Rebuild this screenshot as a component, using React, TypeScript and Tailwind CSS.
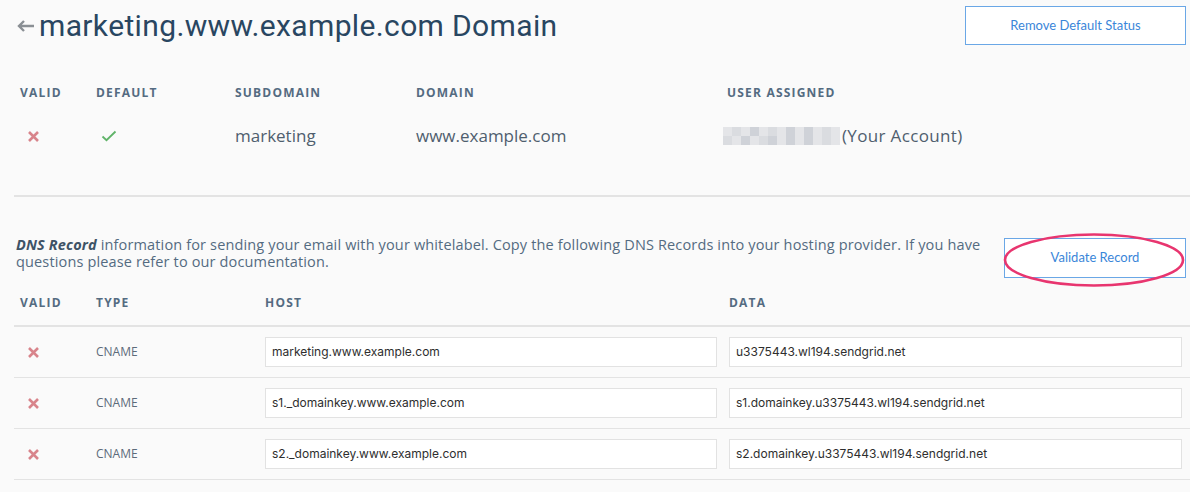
import React from "react";

const headCls =
  "text-[12px] font-bold tracking-[0.1em] uppercase text-[#546b81]";

function XMark() {
  return (
    <svg width="13" height="13" viewBox="0 0 13 13">
      <path
        d="M2 2 L11 11 M11 2 L2 11"
        stroke="#d8848b"
        strokeWidth="2.6"
        strokeLinecap="butt"
      />
    </svg>
  );
}

function Check() {
  return (
    <svg width="16" height="12" viewBox="0 0 16 12">
      <path
        d="M1.5 6.5 L5.5 10.2 L14.5 1.5"
        stroke="#5fb368"
        strokeWidth="1.8"
        fill="none"
      />
    </svg>
  );
}

const records = [
  {
    host: "marketing.www.example.com",
    data: "u3375443.wl194.sendgrid.net",
  },
  {
    host: "s1._domainkey.www.example.com",
    data: "s1.domainkey.u3375443.wl194.sendgrid.net",
  },
  {
    host: "s2._domainkey.www.example.com",
    data: "s2.domainkey.u3375443.wl194.sendgrid.net",
  },
];

function App() {
  return (
    <div
      className="w-[1190px] h-[492px] bg-[#fafafa] overflow-hidden text-[#546b81]"
      style={{ fontFamily: "'Open Sans', Lato, sans-serif" }}
    >
      {/* title row */}
      <div className="flex items-start justify-between pl-4 pr-1 pt-[6px] h-[74px]">
        <div className="flex items-center h-[39px]">
          <svg width="20" height="14" viewBox="0 0 20 14" className="mr-[3px]">
            <path
              d="M18 7 H3 M8 2 L3 7 L8 12"
              stroke="#8a8f94"
              strokeWidth="2.4"
              fill="none"
            />
          </svg>
          <h1
            className="text-[30px] text-[#294661] leading-none tracking-[0.012em]"
            style={{ fontFamily: "Roboto, sans-serif" }}
          >
            marketing.www.example.com Domain
          </h1>
        </div>
        <button
          className="w-[221px] h-[39px] bg-white border border-[#6aa7e6] text-[#3a86d9] text-[13px]"
          style={{ fontFamily: "Lato, sans-serif" }}
        >
          Remove Default Status
        </button>
      </div>

      {/* whitelabel summary */}
      <div className="ml-[14px] border-b-2 border-[#e3e3e3]">
        <div className="grid grid-cols-[76px_139px_181px_311px_1fr] pl-[6px] h-[37px] items-center">
          <div className={headCls}>Valid</div>
          <div className={headCls}>Default</div>
          <div className={headCls}>Subdomain</div>
          <div className={headCls}>Domain</div>
          <div className={headCls}>User Assigned</div>
        </div>
        <div className="grid grid-cols-[76px_139px_181px_311px_1fr] pl-[6px] h-[50px] items-center text-[17px] text-[#4f5e6e]">
          <div className="pl-[7px] flex">
            <XMark />
          </div>
          <div className="pl-[5px] flex">
            <Check />
          </div>
          <div>marketing</div>
          <div>www.example.com</div>
          <div className="flex items-center -ml-[4px]">
            <div className="grid grid-cols-[repeat(13,9px)] grid-rows-2 h-[18px] w-[117px] mr-[2px]">
              {Array.from({ length: 26 }).map((_, i) => (
                <div
                  key={i}
                  className={
                    [3, 7, 9, 15, 18, 20, 22].includes(i)
                      ? "bg-[#cfd2d8]"
                      : [1, 5, 11, 13, 17, 24].includes(i)
                      ? "bg-[#dadce0]"
                      : "bg-[#e4e5e8]"
                  }
                />
              ))}
            </div>
            <span className="tracking-[0.02em]">(Your Account)</span>
          </div>
        </div>
        <div className="h-[34px]" />
      </div>

      {/* DNS description */}
      <div className="flex items-start justify-between pl-4 pr-1 pt-[39px]">
        <p className="text-[14.5px] leading-[17px] w-[972px] tracking-[0.01em] text-[#546b81]">
          <b className="italic font-bold text-[#3e5366]">DNS Record</b>{" "}
          information for sending your email with your whitelabel. Copy the
          following DNS Records into your hosting provider. If you have
          questions please refer to our documentation.
        </p>
        <div className="relative mt-[2px]">
          <button
            className="w-[182px] h-[40px] bg-white border border-[#6aa7e6] text-[#3a86d9] text-[13px]"
            style={{ fontFamily: "Lato, sans-serif" }}
          >
            Validate Record
          </button>
          <svg
            width="186"
            height="60"
            viewBox="0 0 186 60"
            className="absolute -left-[2px] -top-[7px] pointer-events-none"
          >
            <ellipse
              cx="92"
              cy="29"
              rx="89"
              ry="25.5"
              fill="none"
              stroke="#e8356f"
              strokeWidth="2.6"
            />
          </svg>
        </div>
      </div>

      {/* DNS records table */}
      <div className="ml-[14px] mt-[3px]">
        <div className="grid grid-cols-[76px_169px_464px_1fr] pl-[6px] pr-[8px] h-[46px] items-center border-b-2 border-[#e3e3e3]">
          <div className={headCls}>Valid</div>
          <div className={headCls}>Type</div>
          <div className={headCls}>Host</div>
          <div className={headCls}>Data</div>
        </div>
        {records.map((r) => (
          <div
            key={r.host}
            className="grid grid-cols-[76px_169px_464px_1fr] pl-[6px] pr-[8px] h-[51px] items-center border-b border-[#e3e3e3]"
          >
            <div className="pl-[7px] flex">
              <XMark />
            </div>
            <div className="text-[12px] text-[#5d6b7a]">CNAME</div>
            <div
              className="w-[452px] h-[30px] bg-white border border-[#e2e2e2] flex items-center px-[6px] text-[12px] text-[#2e2e2e]"
              style={{ fontFamily: "Inter, sans-serif" }}
            >
              {r.host}
            </div>
            <div
              className="h-[30px] bg-white border border-[#e2e2e2] flex items-center px-[6px] text-[12px] text-[#2e2e2e]"
              style={{ fontFamily: "Inter, sans-serif" }}
            >
              {r.data}
            </div>
          </div>
        ))}
      </div>
    </div>
  );
}

export default App;
